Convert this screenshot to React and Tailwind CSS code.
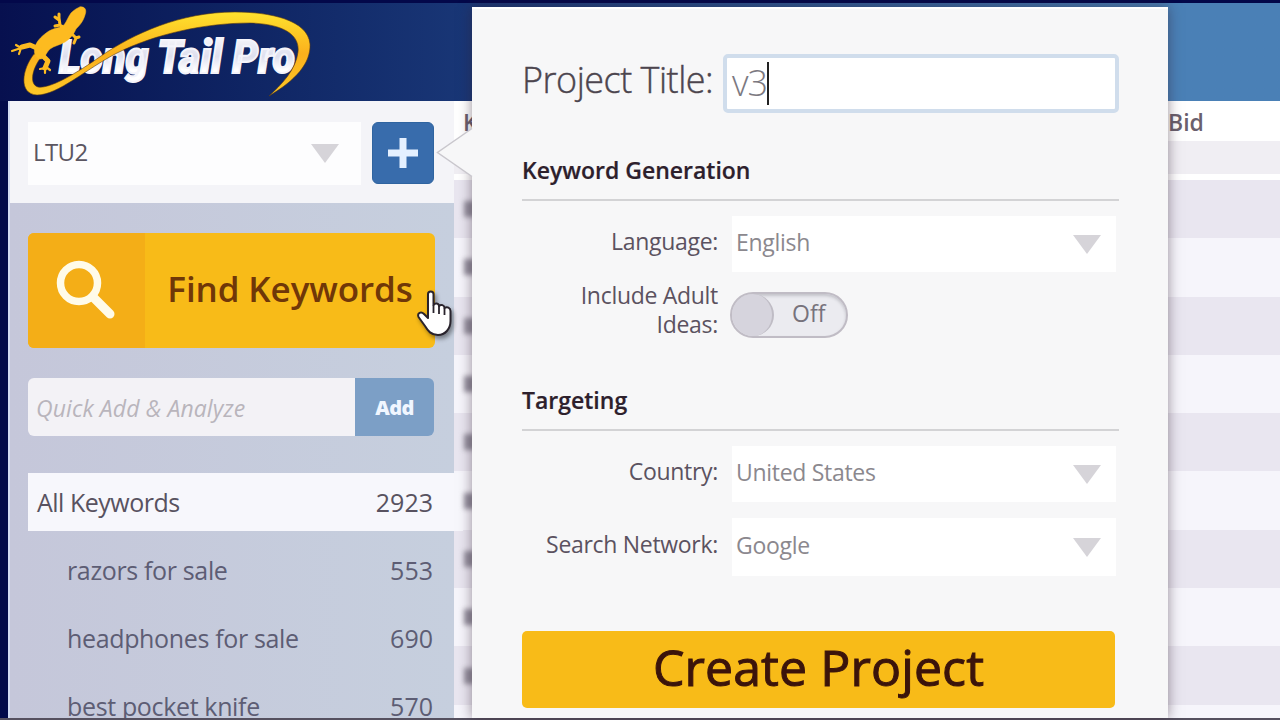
import React, { useState } from 'react';

const keywords = [
  { name: 'razors for sale', count: 553 },
  { name: 'headphones for sale', count: 690 },
  { name: 'best pocket knife', count: 570 },
];

const filas = [0, 1, 2, 3, 4, 5, 6, 7, 8, 9];

const Arrow = ({ className }) => (
  <svg className={className} width="28" height="19" viewBox="0 0 28 19">
    <path d="M0 0H28L14 19Z" fill="#d6d4d9" />
  </svg>
);

const Logo = () => (
  <svg width="330" height="98" viewBox="0 3 330 98" className="overflow-visible">
    <defs>
      <linearGradient id="gold" x1="0" y1="0" x2="0" y2="1">
        <stop offset="0" stopColor="#ffe22e" />
        <stop offset="0.5" stopColor="#fbb01c" />
        <stop offset="1" stopColor="#fdc928" />
      </linearGradient>
      <linearGradient id="letters" x1="0" y1="0" x2="0" y2="1">
        <stop offset="0" stopColor="#ffffff" />
        <stop offset="0.5" stopColor="#dedfee" />
        <stop offset="0.75" stopColor="#ffffff" />
      </linearGradient>
    </defs>
    <text
      x="59"
      y="72.500"
      textLength="236"
      lengthAdjust="spacingAndGlyphs"
      fill="url(#letters)"
      stroke="#f4f4fb"
      strokeWidth="2"
      className="font-[Roboto] text-[46px] font-black italic"
    >
      Long Tail Pro
    </text>
    {/* swoosh */}
    <path
      d="M34 54C22 69 18 94 37 95C58 95 86 69 117 53C155 34 205 23 250 23C284 24 300 35 298 52C296 70 281 85 269 96C296 80 311 63 310 44C308 20 270 12 235 12C180 12 133 34 101 56C77 73 50 89 38 87C28 84 33 66 43 55Z"
      fill="url(#gold)"
      stroke="#5a3a10"
      strokeWidth="0.6"
    />
    {/* gecko */}
    <g fill="#fdbb20" stroke="#fdbb20" strokeLinecap="round" strokeLinejoin="round">
      <path d="M80 7C85 6 87 10 85 15C83 22 79 26 76 29C74 34 70 39 65 42C60 45 54 46 50 49C46 53 45 58 41 59C36 59 33 53 35 47C37 40 43 35 49 31C54 28 60 28 64 25C67 21 68 17 71 13C74 10 77 8 80 7Z" strokeWidth="0.5" />
      <path d="M66 29L60 25L59 18M59 20L55 17M59 20L59 14M60 25L55 26M71 33L76 38L74 43M76 38L79 37" fill="none" strokeWidth="3" />
      <path d="M39 49L30 45L22 47M41 54L48 61L45 68" fill="none" strokeWidth="5" />
      <path d="M21 48L12 51M21 48L16 45M21 48L19 54M45 68L40 69M45 68L45 73M46 67L50 70" fill="none" strokeWidth="2.200" />
    </g>
  </svg>
);

const SelectField = ({ label, value, height, margin }) => (
  <div className={`flex items-center ${height} ${margin}`}>
    <span className="w-[196px] text-right text-[23px] tracking-[-0.3px] text-[#5b5260] whitespace-nowrap pb-1.5">{label}</span>
    <div className="ml-[14px] flex h-full w-[384px] items-center justify-between bg-white pl-1 pr-[15px]">
      <span className="pb-1 text-[23px] tracking-[-0.3px] text-[#8b888e]">{value}</span>
      <Arrow />
    </div>
  </div>
);

const SectionTitle = ({ children, height }) => (
  <h2 className={`flex w-[597px] items-end border-b-2 border-[#d3d3d5] pb-[14px] text-[23px] leading-[30px] font-semibold text-[#2d202c] [-webkit-text-stroke:0.2px_#2d202c] ${height}`}>
    {children}
  </h2>
);

const Sidebar = () => (
  <aside className="flex w-[446px] shrink-0 flex-col border-l-2 border-[#d3dcf2] bg-[#f4f4f8]">
    <div className="flex h-[102px] shrink-0 items-center gap-[11px] pl-[18px] pt-0.5">
      <div className="flex h-[63px] w-[333px] items-center justify-between bg-[#fdfdfe] pl-[5px] pr-[22px]">
        <span className="pb-[3px] text-[24px] tracking-[-0.6px] text-[#5b5661]">LTU2</span>
        <Arrow />
      </div>
      <button className="flex h-[62px] w-[62px] items-center justify-center rounded-md border border-[#2f64a0] bg-[#386cac]">
        <svg width="32" height="32" viewBox="0 0 32 32">
          <path d="M12.500 1H19.500V12.500H31V19.500H19.500V31H12.500V19.500H1V12.500H12.500Z" fill="#e4f0ff" />
        </svg>
      </button>
    </div>

    <div className="flex-1 bg-linear-to-r from-[#c5c7da] to-[#c6cfde] pl-[18px] pt-[30px]">
      <button className="flex h-[115px] w-[407px] overflow-hidden rounded-md bg-[#f8bb18]">
        <span className="flex h-full w-[117px] items-center justify-center bg-[#f4ae17]">
          <svg width="62" height="62" viewBox="0 0 62 62" fill="none" stroke="#fffbe9" strokeLinecap="round">
            <circle cx="23" cy="23" r="18.500" strokeWidth="7.500" />
            <path d="M37 37L54 54" strokeWidth="9" />
          </svg>
        </span>
        <span className="flex h-full flex-1 items-center justify-center pb-0.5 text-[35px] tracking-[-0.1px] font-semibold whitespace-nowrap text-[#703708]">
          Find Keywords
        </span>
      </button>

      <div className="mt-[30px] flex h-[58px] w-[406px] overflow-hidden rounded-md">
        <div className="flex flex-1 items-center bg-[#f3f2f6] pt-0.5 pl-2 text-[23px] italic tracking-[0.1px] text-[#b9b5bc]">Quick Add &amp; Analyze</div>
        <button className="w-[79px] bg-[#7c9fc6] pt-0.5 text-[20px] tracking-[-0.5px] font-extrabold text-[#f0f6ff]">Add</button>
      </div>

      <div className="relative mt-[37px] flex h-[58px] w-[435px] items-center justify-between bg-[#f7f7fc] pt-0.5 pl-[9px] pr-[30px] text-[25px] tracking-[-0.5px] text-[#585260]">
        <span>All Keywords</span>
        <span className="tracking-normal">2923</span>
      </div>

      <ul className="pt-[6px]">
        {keywords.map((k) => (
          <li key={k.name} className="flex h-[68px] w-[405px] items-center justify-between pl-[39px] text-[25px] tracking-[-0.35px] text-[#5d5d74]">
            <span>{k.name}</span>
            <span className="tracking-normal">{k.count}</span>
          </li>
        ))}
      </ul>
    </div>
  </aside>
);

const KeywordTable = () => (
  <main className="flex-1 overflow-hidden bg-white">
    <div className="flex h-[40px] items-center pt-0.5 text-[23px] font-semibold text-[#6a606d]">
      <span className="w-[704px] pl-[9px]">K</span>
      <span className="pl-[10px]">Bid</span>
    </div>
    <div className="h-[33px] bg-[#f0eef3]" />
    <div className="h-[6px] bg-white" />
    {filas.map((f) => (
      <div key={f} className="flex h-[58.3px] items-center pl-[10px] odd:bg-[#f6f5fb] even:bg-[#e9e6f0]">
        <span className="h-4 w-3 bg-[#928e9b] blur-[2.5px]" />
      </div>
    ))}
  </main>
);

const ProjectPopover = () => {
  const [title] = useState('v3');

  return (
    <div className="absolute top-[7px] left-[472px] h-[711px] w-[696px] border-t-2 border-white bg-[#f7f7f8] pl-[50px] pt-[45px] shadow-[0_0_12px_rgba(50,30,50,0.5)]">
      <svg className="absolute top-[118px] -left-[36px]" width="38" height="51" viewBox="0 0 38 51">
        <path d="M38 0L1.500 25.500L38 51Z" fill="#f7f7f8" />
        <path d="M36 1.500L1.500 25.500L36 49.500" fill="none" stroke="#c9c7cd" strokeWidth="1.500" />
      </svg>

      <div className="flex h-[59px] items-center">
        <label className="w-[201px] pb-2 text-[36px] tracking-[-0.5px] font-light whitespace-nowrap text-[#4c454e] [-webkit-text-stroke:0.4px_#4c454e]">Project Title:</label>
        <div className="flex h-full w-[396px] items-center rounded-[5px] border-[4px] border-[#d0ddec] bg-white pl-[5px]">
          <span className="pb-0.5 text-[36px] tracking-[-1px] font-light text-[#7c7981]">{title}</span>
          <span className="h-[43px] w-[2px] bg-[#222222]" />
        </div>
      </div>

      <SectionTitle height="h-[88px]">Keyword Generation</SectionTitle>
      <SelectField label="Language:" value="English" height="h-[56px]" margin="mt-[15px]" />

      <div className="mt-[9px] flex h-[58px]">
        <span className="w-[196px] text-right text-[23px] leading-[29px] tracking-[-0.3px] text-[#5b5260]">
          Include Adult
          <br />
          Ideas:
        </span>
        <div className="mt-[11px] ml-[12px] flex h-[46px] w-[118px] items-center rounded-full border-2 border-[#c0bcc5] bg-[#ebebf0] shadow-[inset_0_2px_3px_rgba(80,80,90,0.25)]">
          <span className="h-[42px] w-[42px] rounded-full border-r-2 border-[#bfbcc5] bg-[#d6d4dd]" />
          <span className="pb-1 pl-[18px] text-[23px] text-[#77727c]">Off</span>
        </div>
      </div>

      <SectionTitle height="h-[92px]">Targeting</SectionTitle>
      <SelectField label="Country:" value="United States" height="h-[56px]" margin="mt-[15px]" />
      <SelectField label="Search Network:" value="Google" height="h-[58px]" margin="mt-[16px]" />

      <button className="mt-[55px] h-[77px] w-[593px] rounded-[5px] bg-[#f8bb18] pb-1.5 text-[50px] tracking-[0.1px] leading-none text-[#3b140b] [-webkit-text-stroke:1px_#3b140b]">
        Create Project
      </button>
    </div>
  );
};

const App = () => {
  return (
    <div className="relative flex h-[720px] w-[1280px] flex-col overflow-hidden bg-[#020a4a] font-['Open_Sans',sans-serif]">
      <header className="h-[101px] shrink-0 border-t-[3px] border-[#03084a] bg-linear-to-r from-[#07104f] via-[#1b3a7a] via-40% to-[#4a80b6] to-90%">
        <Logo />
      </header>

      <div className="flex h-[617px] overflow-hidden pl-2">
        <Sidebar />
        <KeywordTable />
      </div>
      <div className="h-[2px] bg-[#55505f]" />

      <ProjectPopover />

      {/* cursor */}
      <svg className="absolute top-[288px] left-[415px] drop-shadow-[2px_3px_2px_rgba(0,0,0,0.4)]" width="42" height="52" viewBox="0 0 42 52">
        <path
          d="M13 6C13 2.500 18.500 2.500 18.500 6V17C20 14.500 24 15 24 18C26 16 29.500 17 29.500 20C32 18.500 35.500 19.500 35.500 23V33C35.500 41 30 47 23 47C16 47 13 43 10 38L3.500 29C2 25 6 23 9 26L13 30Z"
          fill="#ffffff"
          stroke="#29232c"
          strokeWidth="2"
          strokeLinejoin="round"
        />
        <path d="M18.500 17V25M24 18V26M29.500 20V27" stroke="#29232c" strokeWidth="1.800" />
      </svg>
    </div>
  );
};

export default App;
